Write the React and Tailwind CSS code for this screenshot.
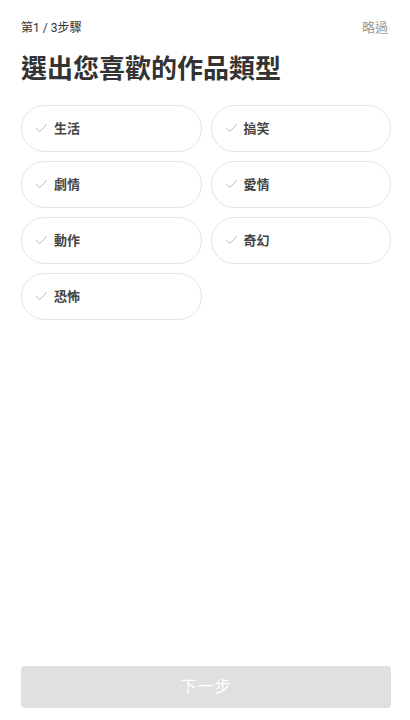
import { Check } from 'lucide-react'

const GENRES = ['生活', '搞笑', '劇情', '愛情', '動作', '奇幻', '恐怖']

export default function App() {
  return (
    <div
      className="w-[410px] h-[720px] bg-white flex flex-col pl-[21px] pr-[19px]"
      style={{ fontFamily: 'Roboto, "Noto Sans CJK TC", sans-serif' }}
    >
      {/* header */}
      <div className="flex items-center justify-between pt-[19px] h-[36px]">
        <span className="text-[12px] text-[#333] leading-none">第1 / 3步驟</span>
        <button className="text-[13px] text-[#999] leading-none mr-[3px]">略過</button>
      </div>

      <h1 className="mt-[18px] text-[26px] font-bold text-[#333] leading-[31px]">
        選出您喜歡的作品類型
      </h1>

      {/* genre grid */}
      <div className="mt-[20px] grid grid-cols-2 gap-x-[9px] gap-y-[9px]">
        {GENRES.map(g => (
          <button
            key={g}
            className="h-[47px] rounded-full border border-[#e4e4e4] bg-white flex items-center pl-[12px] gap-[5px]"
          >
            <Check size={15} strokeWidth={1.5} className="text-[#b0b0b0]" />
            <span className="text-[13px] font-bold text-[#444] leading-none">{g}</span>
          </button>
        ))}
      </div>

      <div className="flex-1" />

      <button className="mb-[12px] h-[42px] w-full rounded-[4px] bg-[#e0e0e0] text-white text-[16px] tracking-[1px]">
        下一步
      </button>
    </div>
  )
}
